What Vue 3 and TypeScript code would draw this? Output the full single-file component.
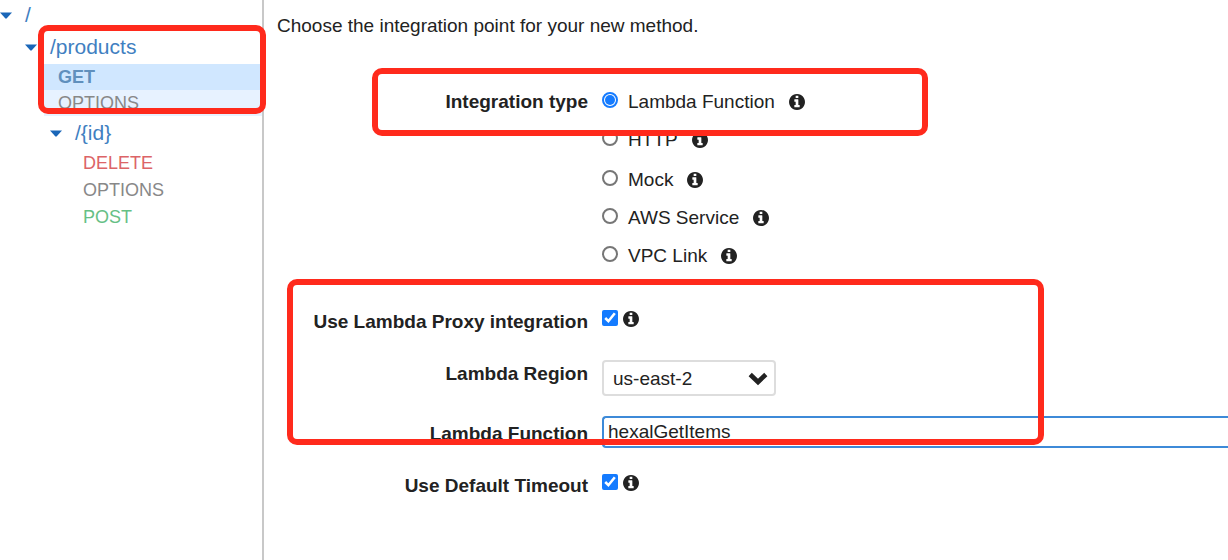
<script setup lang="ts">
import { ref } from 'vue'

interface TreeRow {
  kind: 'resource' | 'method'
  label: string
  level: number
  tone?: string
}

const tree: TreeRow[] = [
  { kind: 'resource', label: '/', level: 0 },
  { kind: 'resource', label: '/products', level: 1 },
  { kind: 'method', label: 'GET', level: 1, tone: 'selected' },
  { kind: 'method', label: 'OPTIONS', level: 1, tone: 'hovered' },
  { kind: 'resource', label: '/{id}', level: 2 },
  { kind: 'method', label: 'DELETE', level: 2, tone: 'delete' },
  { kind: 'method', label: 'OPTIONS', level: 2, tone: 'options' },
  { kind: 'method', label: 'POST', level: 2, tone: 'post' },
]

const types = ['Lambda Function', 'HTTP', 'Mock', 'AWS Service', 'VPC Link']
const integrationType = ref('Lambda Function')
const proxy = ref(true)
const region = ref('us-east-2')
const functionName = ref('hexalGetItems')
const defaultTimeout = ref(true)

const infoPath =
  'M1024 1248v-160q0-14-9-23t-23-9h-96v-512q0-14-9-23t-23-9h-320q-14 0-23 9t-9 23v160q0 14 9 23t23 9h96v320h-96q-14 0-23 9t-9 23v160q0 14 9 23t23 9h448q14 0 23-9t9-23zM896 352v-160q0-14-9-23t-23-9h-192q-14 0-23 9t-9 23v160q0 14 9 23t23 9h192q14 0 23-9t9-23zM1536 768q0 209-103 385.5t-279.5 279.5-385.5 103-385.5-103-279.5-279.5-103-385.5 103-385.5 279.5-279.5 385.5-103 385.5 103 279.5 279.5 103 385.5z'
</script>

<template>
  <div class="page">
    <nav class="sidebar" aria-label="Resources">
      <ul class="tree">
        <li
          v-for="(row, i) in tree"
          :key="i"
          :class="['row', row.kind, `level-${row.level}`, row.tone]"
        >
          <button v-if="row.kind === 'resource'" class="caret" type="button" :aria-label="`Toggle ${row.label}`">
            <svg viewBox="0 0 12 7" width="12" height="7" aria-hidden="true">
              <path d="M0 0.5H12L6.8 6.3Q6 7 5.2 6.3Z" fill="#1a66b8" />
            </svg>
          </button>
          <a href="#">{{ row.label }}</a>
        </li>
      </ul>
    </nav>

    <main class="content">
      <p class="intro">Choose the integration point for your new method.</p>
      <form class="form" @submit.prevent>
        <div class="field types" role="radiogroup" aria-labelledby="type-label">
          <span id="type-label" class="label">Integration type</span>
          <div class="choices">
            <div v-for="(t, i) in types" :key="t" class="choice">
              <input :id="`type-${i}`" v-model="integrationType" type="radio" name="type" :value="t" />
              <label :for="`type-${i}`">{{ t }}</label>
              <button class="info" type="button" :aria-label="`About ${t}`">
                <svg viewBox="0 0 1536 1536" width="16" height="16" aria-hidden="true"><path :d="infoPath" /></svg>
              </button>
            </div>
          </div>
        </div>

        <div class="field proxy">
          <label class="label" for="proxy">Use Lambda Proxy integration</label>
          <div class="check">
            <input id="proxy" v-model="proxy" type="checkbox" />
            <button class="info" type="button" aria-label="About proxy integration">
              <svg viewBox="0 0 1536 1536" width="16" height="16" aria-hidden="true"><path :d="infoPath" /></svg>
            </button>
          </div>
        </div>

        <div class="field region">
          <label class="label" for="region">Lambda Region</label>
          <div class="select">
            <select id="region" v-model="region">
              <option>us-east-2</option>
            </select>
            <svg class="chevron" viewBox="0 0 20 14" width="20" height="14" aria-hidden="true">
              <path d="M2.2 2.5L10 10L17.8 2.5" fill="none" stroke="#222" stroke-width="4.6" />
            </svg>
          </div>
        </div>

        <div class="field function">
          <label class="label" for="fn">Lambda Function</label>
          <input id="fn" v-model="functionName" class="text" type="text" spellcheck="false" />
        </div>

        <div class="field timeout">
          <label class="label" for="timeout">Use Default Timeout</label>
          <div class="check">
            <input id="timeout" v-model="defaultTimeout" type="checkbox" />
            <button class="info" type="button" aria-label="About default timeout">
              <svg viewBox="0 0 1536 1536" width="16" height="16" aria-hidden="true"><path :d="infoPath" /></svg>
            </button>
          </div>
        </div>
      </form>
    </main>

    <div class="mark mark-methods"></div>
    <div class="mark mark-type"></div>
    <div class="mark mark-lambda"></div>
  </div>
</template>

<style>
body {
  margin: 0;
  background: #fff;
}
</style>

<style scoped>
.page {
  position: relative;
  display: flex;
  min-height: 100vh;
  overflow: hidden;
  font-family: 'Liberation Sans', Arial, sans-serif;
  font-size: 19px;
  color: #222;
}
button {
  display: flex;
  padding: 0;
  border: 0;
  background: none;
  cursor: pointer;
}
.sidebar {
  box-sizing: border-box;
  flex: 0 0 264px;
  border-right: 2px solid #c8c8c8;
}
.tree {
  margin: 0;
  padding: 0;
  list-style: none;
}
.row {
  display: flex;
  align-items: center;
}
.row a {
  color: inherit;
  text-decoration: none;
}
.resource {
  gap: 13px;
  height: 34px;
  font-size: 21px;
  color: #3f80c1;
}
.resource.level-0 {
  height: 30px;
}
.resource.level-1 {
  padding-left: 25px;
}
.resource.level-2 {
  padding-left: 50px;
}
.method {
  height: 27px;
  font-size: 18px;
}
.method.level-1 {
  height: 26px;
  margin-left: 44px;
  padding-left: 14px;
}
.method.level-2 {
  padding-left: 83px;
}
.selected {
  background: #d0e7ff;
  color: #6090bd;
  font-weight: bold;
}
.hovered {
  background: #e7f2ff;
  color: #888;
}
.delete {
  color: #dc6467;
}
.options {
  color: #888;
}
.post {
  color: #66c085;
}
.content {
  flex: 1;
  min-width: 0;
  padding: 13px 0 0 13px;
}
.intro {
  margin: 0 0 44px;
  line-height: 26px;
}
.field {
  display: grid;
  grid-template-columns: 311px minmax(0, 1fr);
  column-gap: 14px;
  align-items: start;
}
.label {
  font-weight: bold;
  line-height: 28px;
  text-align: right;
  white-space: nowrap;
}
.types .label {
  line-height: 38px;
}
.choice {
  display: flex;
  align-items: center;
  height: 38px;
}
.choice:nth-child(2) {
  margin-bottom: 2px;
}
input[type='radio'],
input[type='checkbox'] {
  flex: none;
  width: 16px;
  height: 16px;
  margin: 0;
  accent-color: #147bff;
}
input[type='radio'] {
  appearance: none;
  box-sizing: border-box;
  margin: 0 10px 4px 0;
  border: 2px solid #767676;
  border-radius: 50%;
  background: #fff;
}
input[type='radio']:checked {
  padding: 1px;
  border-color: #147bff;
  background: #147bff content-box;
}
.choice .info {
  margin-left: 14px;
}
.info {
  color: #222;
}
.info svg {
  fill: currentColor;
}
.check {
  display: flex;
  gap: 5px;
  padding-top: 2px;
}
.check .info {
  padding-top: 1px;
}
.proxy {
  margin-top: 33px;
}
.region {
  margin-top: 24px;
}
.select {
  position: relative;
  width: 174px;
}
select {
  appearance: none;
  display: block;
  box-sizing: border-box;
  width: 100%;
  height: 36px;
  padding: 0 36px 0 9px;
  border: 2px solid #ddd;
  border-radius: 4px;
  background: #fff;
  color: inherit;
  font: inherit;
}
.chevron {
  position: absolute;
  top: 12px;
  right: 8px;
  pointer-events: none;
}
.function {
  margin-top: 20px;
}
.function .label {
  padding-top: 4px;
}
.text {
  box-sizing: border-box;
  width: 100%;
  height: 32px;
  padding: 0 4px;
  border: 2px solid #3d8ad8;
  border-right: 0;
  border-radius: 4px 0 0 4px;
  outline: 0;
  background: #fff;
  color: inherit;
  font: inherit;
}
.timeout {
  margin-top: 24px;
}
.mark {
  position: absolute;
  box-sizing: border-box;
  border: 6px solid #ff2a1c;
  border-radius: 10px;
  pointer-events: none;
}
.mark-methods {
  left: 38px;
  top: 25px;
  width: 228px;
  height: 89px;
}
.mark-type {
  left: 372px;
  top: 68px;
  width: 556px;
  height: 68px;
}
.mark-lambda {
  left: 287px;
  top: 279px;
  width: 757px;
  height: 166px;
}
</style>
